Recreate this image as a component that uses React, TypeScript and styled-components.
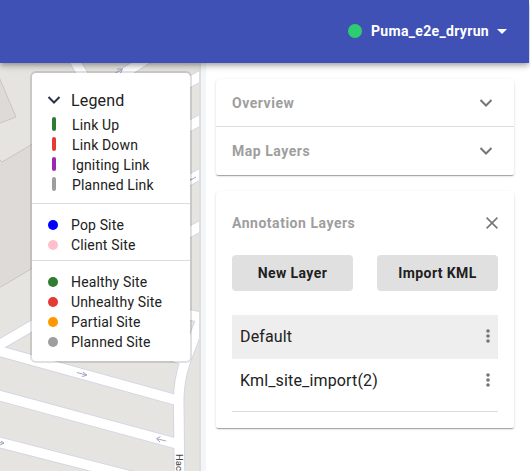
import React from "react";
import styled, { createGlobalStyle } from "styled-components";

const GlobalStyle = createGlobalStyle`
  *, *::before, *::after { box-sizing: border-box; }
  html, body { margin: 0; padding: 0; background: #fff; overflow: hidden; }
  body { font-family: Roboto, "Liberation Sans", sans-serif; color: #212121; }
  button { font: inherit; border: 0; padding: 0; background: none; color: inherit; }
`;

const Page = styled.div`
  display: flex;
  flex-direction: column;
  width: 530px;
  height: 471px;
`;

const AppBar = styled.header`
  display: flex;
  align-items: center;
  justify-content: flex-end;
  gap: 8px;
  flex: 0 0 63px;
  margin-right: 1px;
  padding: 0 22px 1px 0;
  background: #3f51b5;
  color: #fff;
  box-shadow: 0 2px 4px -1px rgba(0, 0, 0, 0.2), 0 4px 5px rgba(0, 0, 0, 0.14),
    0 1px 10px rgba(0, 0, 0, 0.12);
  z-index: 2;
`;

const StatusDot = styled.span`
  width: 14px;
  height: 14px;
  margin-right: 1px;
  border-radius: 50%;
  background: #2ecc71;
`;

const NetworkName = styled.span`
  font-size: 14px;
  font-weight: 700;
  line-height: 20px;
  letter-spacing: 0.33px;
`;

const Body = styled.main`
  display: flex;
  flex: 1;
  min-height: 0;
`;

const MapPane = styled.section`
  display: grid;
  flex: 0 0 201px;
  overflow: hidden;
  background: #e5e4e0;
  > * { grid-area: 1 / 1; }
`;

const Legend = styled.aside`
  align-self: start;
  width: 162px;
  height: 292px;
  margin: 8px 0 0 30px;
  border: 2px solid rgba(0, 0, 0, 0.12);
  border-radius: 6px;
  background: #fff;
  background-clip: padding-box;
  z-index: 1;
`;

const LegendGroup = styled.div<{ $top: number; $bottom: number }>`
  padding: ${(p) => p.$top}px 0 ${(p) => p.$bottom}px 14px;
  & + & { border-top: 1px solid #dcdcdc; }
`;

const LegendTitle = styled.div`
  display: flex;
  align-items: center;
  gap: 10px;
  height: 24px;
  margin: 0 0 3px 1px;
  font-size: 16px;
  letter-spacing: 0.15px;
`;

const LegendRow = styled.div<{ $indent: number }>`
  display: grid;
  grid-template-columns: ${(p) => p.$indent}px 1fr;
  align-items: center;
  height: 20px;
  font-size: 14px;
  letter-spacing: 0.15px;
  white-space: nowrap;
`;

const LinkMark = styled.i<{ $color: string }>`
  width: 4px;
  height: 14px;
  margin: -2px 0 0 6px;
  border-radius: 2px;
  background: ${(p) => p.$color};
`;

const SiteMark = styled.i<{ $color: string }>`
  width: 10px;
  height: 10px;
  margin-left: 2px;
  border-radius: 50%;
  background: ${(p) => p.$color};
`;

const SidePanel = styled.section`
  display: flex;
  flex-direction: column;
  gap: 16px;
  flex: 1;
  padding: 16px 16px 0 10px;
  border-left: 5px solid #f3f6f9;
`;

const Card = styled.div`
  border-radius: 4px 4px 2px 2px;
  background: #fff;
  box-shadow: 0 2px 1px -1px rgba(0, 0, 0, 0.2), 0 1px 1px rgba(0, 0, 0, 0.14),
    0 1px 3px rgba(0, 0, 0, 0.12);
`;

const SectionButton = styled.button`
  display: flex;
  align-items: center;
  justify-content: space-between;
  width: 100%;
  height: 48px;
  padding: 0 16px;
  & + & { border-top: 1px solid #dcdcdc; height: 49px; margin-top: -1px; }
`;

const SectionTitle = styled.span`
  color: #9e9e9e;
  font-size: 14px;
  font-weight: 700;
  line-height: 20px;
  letter-spacing: 0.52px;
`;

const AnnotationCard = styled(Card)`
  height: 237px;
  padding: 20px 16px 0;
`;

const CardHeader = styled.div`
  display: flex;
  align-items: center;
  justify-content: space-between;
  height: 24px;
`;

const Actions = styled.div`
  display: grid;
  grid-template-columns: 1fr 1fr;
  gap: 24px;
  margin-top: 20px;
`;

const ActionButton = styled.button`
  height: 36px;
  border-radius: 4px;
  background: #e0e0e0;
  font-size: 14px;
  font-weight: 700;
  letter-spacing: 0.4px;
`;

const LayerList = styled.div`
  height: 97px;
  margin-top: 24px;
  border-bottom: 1px solid #dcdcdc;
`;

const LayerRow = styled.div<{ $selected?: boolean }>`
  display: flex;
  align-items: center;
  justify-content: space-between;
  height: 44px;
  padding: 0 8px 2px;
  background: ${(p) => (p.$selected ? "#eeeeee" : "transparent")};
  font-size: 16px;
  letter-spacing: 0.15px;
`;

const Chevron = ({ color }: { color: string }) => (
  <svg width="14" height="10" viewBox="0 0 14 10" fill="none">
    <path d="M1.5 2 7 7.5 12.5 2" stroke={color} strokeWidth="2" />
  </svg>
);

const MoreIcon = () => (
  <svg width="4" height="16" viewBox="0 0 4 16" fill="#757575">
    <circle cx="2" cy="3" r="1.8" />
    <circle cx="2" cy="8" r="1.8" />
    <circle cx="2" cy="13" r="1.8" />
  </svg>
);

const SectionChevron = styled.span`
  display: flex;
  margin-right: 5px;
`;

const roads = [
  "M70 53 86 80",
  "M98 90 148 58",
  "M184 85 206 73",
  "M184 129 206 117",
  "M184 183 206 171",
  "M184 235 206 223",
  "M-6 348 36 323.5",
  "M-8 349 178 400.5",
  "M-8 393.5 178 444",
  "M-8 440.5 142 479",
  "M140 346 184 360",
  "M180 312.5 204 318",
  "M179.5 476 178.7 402Q178.4 382 185 362L202 317",
];

const StreetMap = () => (
  <svg width="201" height="408" viewBox="0 63 201 408" fill="none">
    <g fill="#dedad7" stroke="#c9c6c2" strokeWidth="1">
      <path d="M-1 77 16 117-1 123.5Z" />
      <path d="M-1 159 2 162 36 142V266L-1 288Z" />
    </g>
    <g stroke="#d3d4e5" strokeWidth="11.4">
      {roads.map((d) => <path key={d} d={d} />)}
    </g>
    <g stroke="#fff" strokeWidth="9.6">
      {roads.map((d) => <path key={d} d={d} />)}
    </g>
    <path d="M200 63V471" stroke="#dededd" strokeWidth="2" />
    <g stroke="#a3a6c1" strokeWidth="1">
      <path d="M77 372.5 86 375M83 372 87 375.2 82 376.5" />
      <path d="M166 441 157 438.8M160.5 436.5 156.5 438.7 160 442" />
      <path d="M4 443.5-4 441.5M1 441 4 443 0 445" />
      <path d="M115 73.5 122 69.5M117 69 122.5 69 120 74" />
      <path d="M188 181.5 196 177M191 178.5 189 181" />
    </g>
    <text
      x="454"
      y="-176"
      transform="rotate(90)"
      fill="#424242"
      fontSize="9.5"
      fontFamily="Roboto, sans-serif"
    >
      Hac
    </text>
  </svg>
);

const links = [
  ["Link Up", "#2e7d32"],
  ["Link Down", "#e53935"],
  ["Igniting Link", "#9c27b0"],
  ["Planned Link", "#9e9e9e"],
];
const siteTypes = [
  ["Pop Site", "#0000ff"],
  ["Client Site", "#ffc0cb"],
];
const siteStates = [
  ["Healthy Site", "#2e7d32"],
  ["Unhealthy Site", "#e53935"],
  ["Partial Site", "#ff9800"],
  ["Planned Site", "#9e9e9e"],
];

export default function App() {
  return (
    <>
      <GlobalStyle />
      <Page>
        <AppBar>
          <StatusDot />
          <NetworkName>Puma_e2e_dryrun</NetworkName>
          <svg width="10" height="5" viewBox="0 0 10 5">
            <path d="M0 0H10L5 5Z" fill="#fff" />
          </svg>
        </AppBar>
        <Body>
          <MapPane>
            <StreetMap />
            <Legend>
              <LegendGroup $top={15} $bottom={8}>
                <LegendTitle>
                  <Chevron color="#2b3348" />
                  Legend
                </LegendTitle>
                {links.map(([name, color]) => (
                  <LegendRow key={name} $indent={26}>
                    <LinkMark $color={color} />
                    {name}
                  </LegendRow>
                ))}
              </LegendGroup>
              <LegendGroup $top={11} $bottom={5}>
                {siteTypes.map(([name, color]) => (
                  <LegendRow key={name} $indent={25}>
                    <SiteMark $color={color} />
                    {name}
                  </LegendRow>
                ))}
              </LegendGroup>
              <LegendGroup $top={11} $bottom={5}>
                {siteStates.map(([name, color]) => (
                  <LegendRow key={name} $indent={25}>
                    <SiteMark $color={color} />
                    {name}
                  </LegendRow>
                ))}
              </LegendGroup>
            </Legend>
          </MapPane>
          <SidePanel>
            <Card>
              {["Overview", "Map Layers"].map((name) => (
                <SectionButton key={name}>
                  <SectionTitle>{name}</SectionTitle>
                  <SectionChevron>
                    <Chevron color="#757575" />
                  </SectionChevron>
                </SectionButton>
              ))}
            </Card>
            <AnnotationCard>
              <CardHeader>
                <SectionTitle>Annotation Layers</SectionTitle>
                <svg width="12" height="12" viewBox="0 0 12 12">
                  <path d="M.6.6 11.4 11.4M11.4.6.6 11.4" stroke="#757575" strokeWidth="1.5" />
                </svg>
              </CardHeader>
              <Actions>
                <ActionButton>New Layer</ActionButton>
                <ActionButton>Import KML</ActionButton>
              </Actions>
              <LayerList>
                <LayerRow $selected>
                  Default
                  <MoreIcon />
                </LayerRow>
                <LayerRow>
                  Kml_site_import(2)
                  <MoreIcon />
                </LayerRow>
              </LayerList>
            </AnnotationCard>
          </SidePanel>
        </Body>
      </Page>
    </>
  );
}
